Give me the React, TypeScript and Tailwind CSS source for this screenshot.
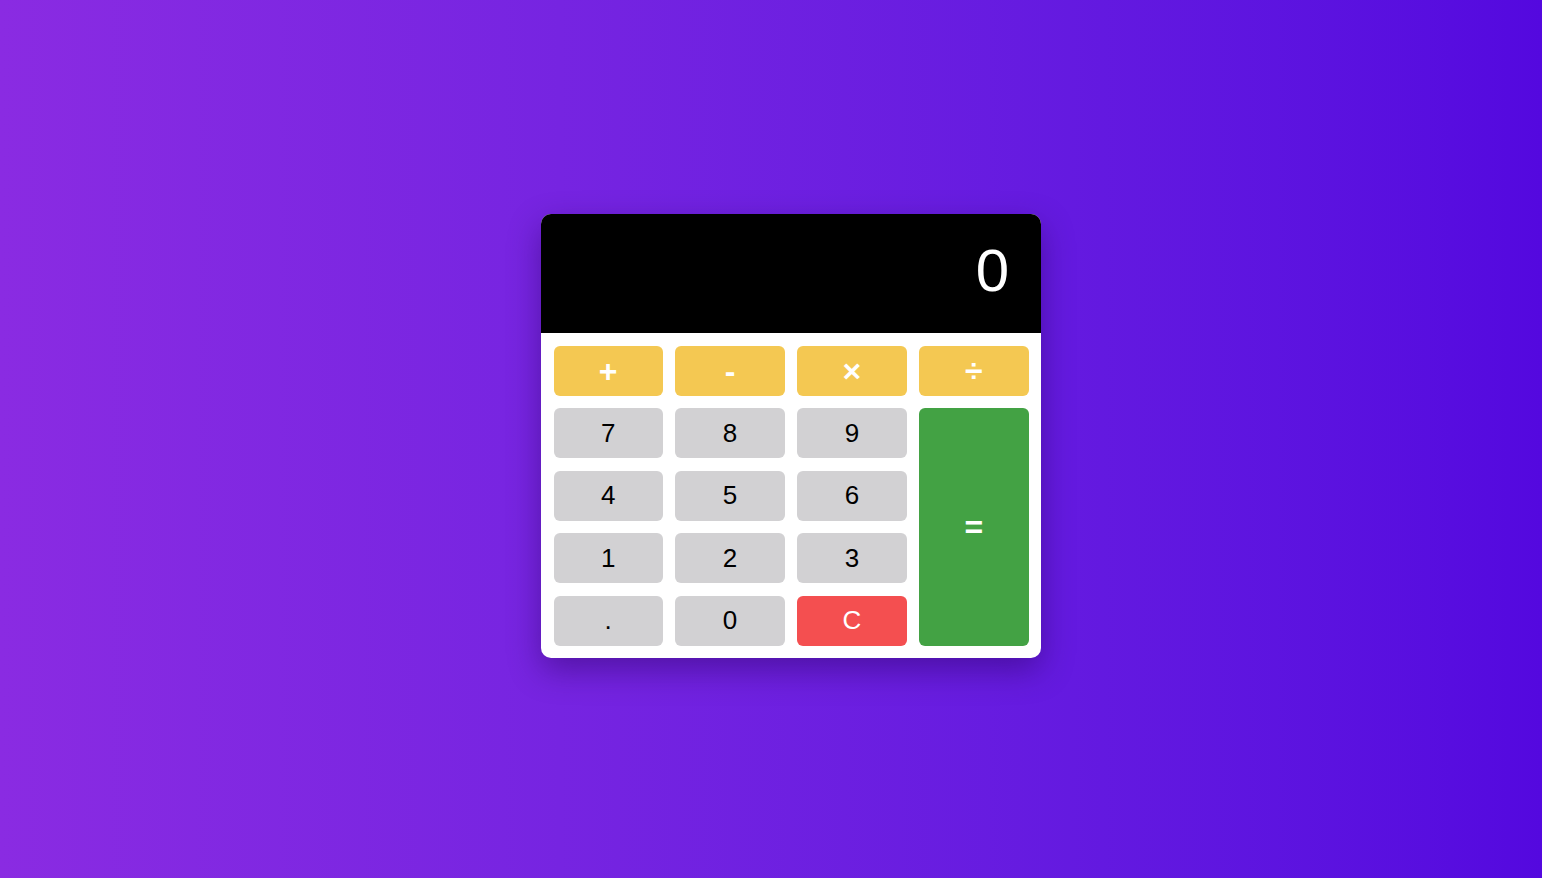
import { useState } from "react";

const ops = ["+", "-", "×", "÷"];
const nums = ["7", "8", "9", "4", "5", "6", "1", "2", "3"];

const App = () => {
  const [value, setValue] = useState("0");

  const press = (k: string) => {
    if (k === "C") return setValue("0");
    setValue((v) => (v === "0" && k !== "." ? k : v + k));
  };

  const calc = () => {
    try {
      // eslint-disable-next-line no-new-func
      const r = Function(`return (${value.replace(/×/g, "*").replace(/÷/g, "/")})`)();
      setValue(String(r));
    } catch {
      setValue("Error");
    }
  };

  const btn = "h-[50px] rounded-md text-[26px] flex items-center justify-center";
  const opBtn = "h-[50px] rounded-md text-[32px] font-bold flex items-center justify-center bg-[#f4c852] text-white";

  return (
    <div
      className="min-h-screen w-full flex items-center justify-center pl-[40px] pb-[6px] bg-gradient-to-r from-[#8a2be2] to-[#5408df]"
      style={{ fontFamily: '"Liberation Sans", Arial, sans-serif' }}
    >
      <div className="w-[500px] bg-white rounded-[10px] overflow-hidden shadow-[0_12px_32px_rgba(40,0,90,0.45)]">
        {/* display */}
        <div className="h-[119px] bg-black text-white text-[60px] flex items-center justify-end pr-[32px] pb-[6px]">
          {value}
        </div>

        <div className="grid grid-cols-4 grid-rows-[repeat(5,50px)] gap-[12.5px] p-[12.5px]">
          {ops.map((o) => (
            <button key={o} onClick={() => press(o)} className={opBtn}>
              {o}
            </button>
          ))}
          <div className="col-span-3 grid grid-cols-3 gap-[12.5px] row-span-4">
            {nums.map((n) => (
              <button key={n} onClick={() => press(n)} className={`${btn} bg-[#d2d1d3] text-black`}>
                {n}
              </button>
            ))}
            <button onClick={() => press(".")} className={`${btn} bg-[#d2d1d3] text-black`}>.</button>
            <button onClick={() => press("0")} className={`${btn} bg-[#d2d1d3] text-black`}>0</button>
            <button onClick={() => press("C")} className={`${btn} bg-[#f44f50] text-white`}>C</button>
          </div>
          <button
            onClick={calc}
            className="row-span-4 rounded-md bg-[#43a244] text-white text-[32px] font-bold flex items-center justify-center"
          >
            =
          </button>
        </div>
      </div>
    </div>
  );
};

export default App;
